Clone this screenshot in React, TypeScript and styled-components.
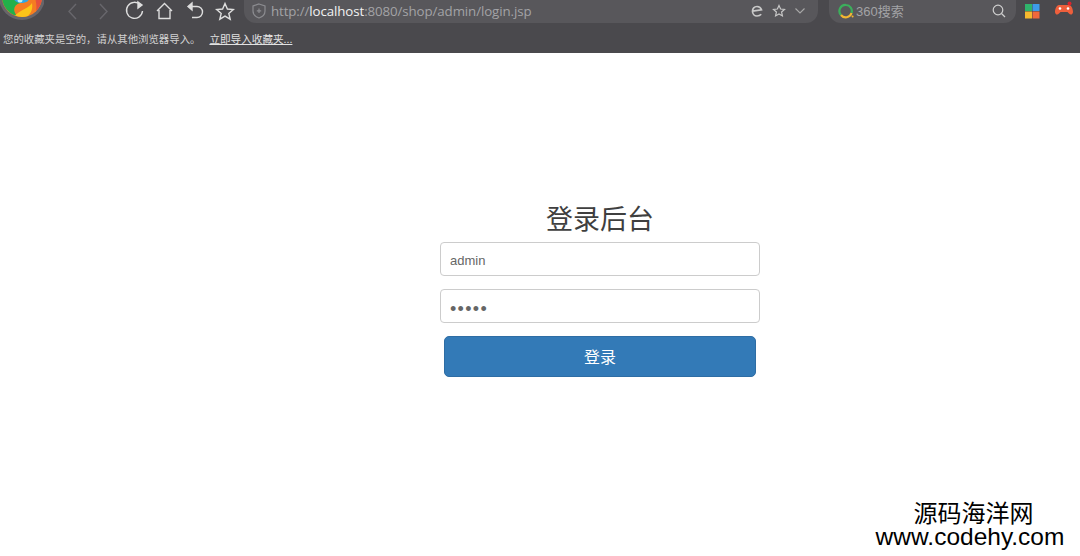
import React from 'react'
import styled, { createGlobalStyle } from 'styled-components'

const GlobalStyle = createGlobalStyle`
  html, body {
    margin: 0;
    padding: 0;
    background: #fff;
    font-family: "Liberation Sans", "Noto Sans CJK SC", sans-serif;
  }
`

const Page = styled.div`
  position: relative;
  width: 1080px;
  height: 556px;
  overflow: hidden;
  background: #fff;
`

const BrowserChrome = styled.div`
  height: 53px;
  background: #4a494d;
`

const NavRow = styled.div`
  display: flex;
  align-items: flex-start;
  height: 23px;
`

const Logo = styled.svg`
  width: 44px;
  height: 23px;
  flex: none;
`

const NavIcons = styled.div`
  display: flex;
  align-items: center;
  width: 200px;
  height: 23px;
  padding-left: 13px;
  box-sizing: border-box;
  flex: none;
`

const NavIcon = styled.svg<{ $slot: number; $dim?: boolean }>`
  width: ${(p) => p.$slot}px;
  height: 23px;
  flex: none;
  fill: none;
  stroke: ${(p) => (p.$dim ? '#68676c' : '#dedede')};
  stroke-width: 1.4;
`

const AddressBar = styled.div`
  display: flex;
  align-items: center;
  width: 574px;
  height: 23px;
  padding: 0 12px 2px 8px;
  box-sizing: border-box;
  background: #58575b;
  border-radius: 0 0 12px 12px;
  flex: none;
`

const UrlText = styled.div`
  flex: 1;
  margin-left: 5px;
  font-size: 13.3px;
  color: #a3a3a6;
  white-space: nowrap;
  font-family: "Open Sans", "Liberation Sans", sans-serif;
  letter-spacing: -0.1px;
`

const UrlHost = styled.span`
  color: #f2f2f2;
`

const SearchBar = styled.div`
  display: flex;
  align-items: center;
  width: 187px;
  height: 23px;
  margin-left: 11px;
  padding: 0 10px 2px 9px;
  box-sizing: border-box;
  background: #58575b;
  border-radius: 0 0 12px 12px;
  flex: none;
`

const SearchText = styled.div`
  flex: 1;
  margin-left: 2px;
  font-size: 13px;
  color: #a3a3a6;
  white-space: nowrap;
`

const AppSlot = styled.svg<{ $gap: number }>`
  width: 18px;
  height: 23px;
  margin-left: ${(p) => p.$gap}px;
  flex: none;
`

const BookmarkRow = styled.div`
  display: flex;
  align-items: center;
  height: 30px;
  padding: 1px 0 0 3px;
  box-sizing: border-box;
  font-size: 10.4px;
  color: #d2d2d2;
  white-space: nowrap;
`

const ImportLink = styled.span`
  margin-left: 9px;
  font-size: 10.6px;
  color: #e2e2e2;
  text-decoration: underline;
`

const Main = styled.main`
  display: flex;
  flex-direction: column;
  width: 320px;
  margin-left: 440px;
  padding-top: 151px;
`

const Title = styled.h1`
  margin: 0 0 5px;
  height: 33px;
  line-height: 33px;
  font-size: 27px;
  font-weight: 400;
  color: #3f3f3f;
  text-align: center;
`

const Field = styled.input<{ $dots?: boolean }>`
  display: block;
  width: 100%;
  height: 34px;
  margin-bottom: 13px;
  padding: ${(p) => (p.$dots ? '7px' : '3px')} 9px 0;
  box-sizing: border-box;
  border: 1px solid #ccc;
  border-radius: 4px;
  outline: none;
  background: #fff;
  font-family: "Liberation Sans", sans-serif;
  font-size: ${(p) => (p.$dots ? '18px' : '13px')};
  letter-spacing: ${(p) => (p.$dots ? '1.3px' : '0')};
  color: #666;
`

const Submit = styled.button`
  align-self: center;
  width: 312px;
  height: 41px;
  padding: 0 0 2px;
  border: 1px solid #2e6da4;
  border-radius: 5px;
  background: #337ab7;
  color: #fff;
  font-family: "Liberation Sans", "Noto Sans CJK SC", sans-serif;
  font-size: 16px;
`

const Watermark = styled.div`
  position: absolute;
  right: 0;
  bottom: 7px;
  width: 210px;
  color: #000;
  text-align: center;
`

const WatermarkName = styled.div`
  font-size: 24px;
  line-height: 24px;
  margin-bottom: 1px;
  font-family: "Noto Sans CJK SC", sans-serif;
  margin-right: 3px;
`

const WatermarkUrl = styled.div`
  font-size: 24.5px;
  line-height: 24px;
  font-family: "Liberation Sans", sans-serif;
  margin-right: 10px;
`

function App () {
  return (
    <Page>
      <GlobalStyle />
      <BrowserChrome>
        <NavRow>
          <Logo viewBox='0 0 44 23'>
            <circle cx='22' cy='-3' r='23' fill='#67656a' />
            <circle cx='22' cy='-3' r='20' fill='#f57c22' />
            <path d='M2 -3 A20 20 0 0 0 17 16 C12 10 14 5 20 3 L22 -3 Z' fill='#22b04a' />
            <path d='M15 15.6 A20 20 0 0 0 28 16 C31 13 33 9 32 3 C29 8 22 9 15 15.6 Z' fill='#fcc419' />
            <path d='M36 11 A20 20 0 0 0 42 -3 L35 -3 C36 2 37 6 36 11 Z' fill='#e5503c' />
            <path d='M13 -3 C14 3 22 5 28 1 L30 -3 Z' fill='#2fa6e6' />
            <circle cx='20' cy='0' r='2.5' fill='#bdeeea' />
          </Logo>
          <NavIcons>
            <NavIcon $slot={31} $dim viewBox='0 0 31 23'>
              <path d='M19 4 L12 11.5 L19 19' />
            </NavIcon>
            <NavIcon $slot={31} $dim viewBox='0 0 31 23'>
              <path d='M12 4 L19 11.5 L12 19' />
            </NavIcon>
            <NavIcon $slot={30} viewBox='0 0 30 23'>
              <path d='M21.5 5 A8 8 0 1 0 23.5 11' />
              <path d='M19 2 L23 5 L19 8 Z' fill='#dedede' />
            </NavIcon>
            <NavIcon $slot={31} viewBox='0 0 31 23'>
              <path d='M8 11 L15.5 3.5 L23 11 M10 10 V18.5 H21 V10' />
            </NavIcon>
            <NavIcon $slot={30} viewBox='0 0 30 23'>
              <path d='M9 6.5 H17 A5.5 5.5 0 0 1 17 17.5 H12' />
              <path d='M12 3 L8 6.5 L12 10 Z' fill='#dedede' />
            </NavIcon>
            <NavIcon $slot={30} viewBox='0 0 30 23'>
              <path d='M15 3.5 L17.4 9 L23.3 9.5 L18.8 13.4 L20.2 19.2 L15 16.1 L9.8 19.2 L11.2 13.4 L6.7 9.5 L12.6 9 Z' />
            </NavIcon>
          </NavIcons>
          <AddressBar>
            <svg width='14' height='16' viewBox='0 0 14 16' fill='none' stroke='#8c8c90' strokeWidth='1.2'>
              <path d='M7 1 L13 3 V8 C13 11.5 10 14 7 15 C4 14 1 11.5 1 8 V3 Z' />
              <path d='M7 5.5 V10 M4.8 7.8 H9.2' />
            </svg>
            <UrlText>
              http://<UrlHost>localhost</UrlHost>:8080/shop/admin/login.jsp
            </UrlText>
            <svg width='14' height='14' viewBox='0 0 14 14' fill='none' stroke='#c8c8c8' strokeWidth='1.7'>
              <path d='M2.5 7.2 L11.5 5.8 C10.8 3.6 9 2.5 7 2.5 C4.2 2.5 2.5 4.7 2.5 7.2 C2.5 10 4.5 12 7 12 C8.8 12 10.2 11.4 11.2 10.2' />
            </svg>
            <svg style={{ marginLeft: 8 }} width='14' height='14' viewBox='0 0 14 14' fill='none' stroke='#c8c8c8' strokeWidth='1.2'>
              <path d='M7 1.5 L8.6 5 L12.5 5.4 L9.6 8 L10.4 11.9 L7 9.9 L3.6 11.9 L4.4 8 L1.5 5.4 L5.4 5 Z' />
            </svg>
            <svg style={{ marginLeft: 8 }} width='12' height='8' viewBox='0 0 12 8' fill='none' stroke='#a8a8a8' strokeWidth='1.1'>
              <path d='M1.5 1.5 L6 6 L10.5 1.5' />
            </svg>
          </AddressBar>
          <SearchBar>
            <svg width='16' height='16' viewBox='0 0 16 16' fill='none' strokeWidth='2.2'>
              <path d='M3 12 A6 6 0 0 1 8 2 A6 6 0 0 1 13.5 10' stroke='#3cae5c' />
              <path d='M13.5 10 A6 6 0 0 1 3 12' stroke='#f2b632' />
              <circle cx='14.6' cy='13.6' r='1' fill='#f2b632' stroke='none' />
            </svg>
            <SearchText>360搜索</SearchText>
            <svg width='14' height='14' viewBox='0 0 14 14' fill='none' stroke='#cfcfcf' strokeWidth='1.2'>
              <circle cx='6' cy='6' r='4.8' />
              <path d='M9.5 9.5 L13 13' />
            </svg>
          </SearchBar>
          <AppSlot $gap={9} viewBox='0 0 18 23'>
            <rect x='0' y='4' width='7' height='7' fill='#2fb36b' />
            <rect x='7.5' y='4' width='7' height='7' fill='#3d9be9' />
            <rect x='0' y='11.5' width='7' height='7' fill='#f5b92e' />
            <rect x='7.5' y='11.5' width='7' height='7' fill='#f0683c' />
          </AppSlot>
          <AppSlot $gap={12} viewBox='0 0 18 23'>
            <path d='M4 5 H14 C16.5 5 18 9 18 12 C18 14.5 15.5 15.5 14 13.5 L12.5 12 H5.5 L4 13.5 C2.5 15.5 0 14.5 0 12 C0 9 1.5 5 4 5 Z' fill='#ee5f3c' />
            <circle cx='5' cy='8.5' r='1.3' fill='#fff' />
            <circle cx='13' cy='8.5' r='1.3' fill='#fff' />
            <circle cx='14.5' cy='3.5' r='2' fill='#d9242c' />
          </AppSlot>
        </NavRow>
        <BookmarkRow>
          您的收藏夹是空的，请从其他浏览器导入。
          <ImportLink>立即导入收藏夹...</ImportLink>
        </BookmarkRow>
      </BrowserChrome>
      <Main>
        <Title>登录后台</Title>
        <Field readOnly value='admin' />
        <Field readOnly $dots type='password' value='admin' />
        <Submit type='button'>登录</Submit>
      </Main>
      <Watermark>
        <WatermarkName>源码海洋网</WatermarkName>
        <WatermarkUrl>www.codehy.com</WatermarkUrl>
      </Watermark>
    </Page>
  )
}

export default App
